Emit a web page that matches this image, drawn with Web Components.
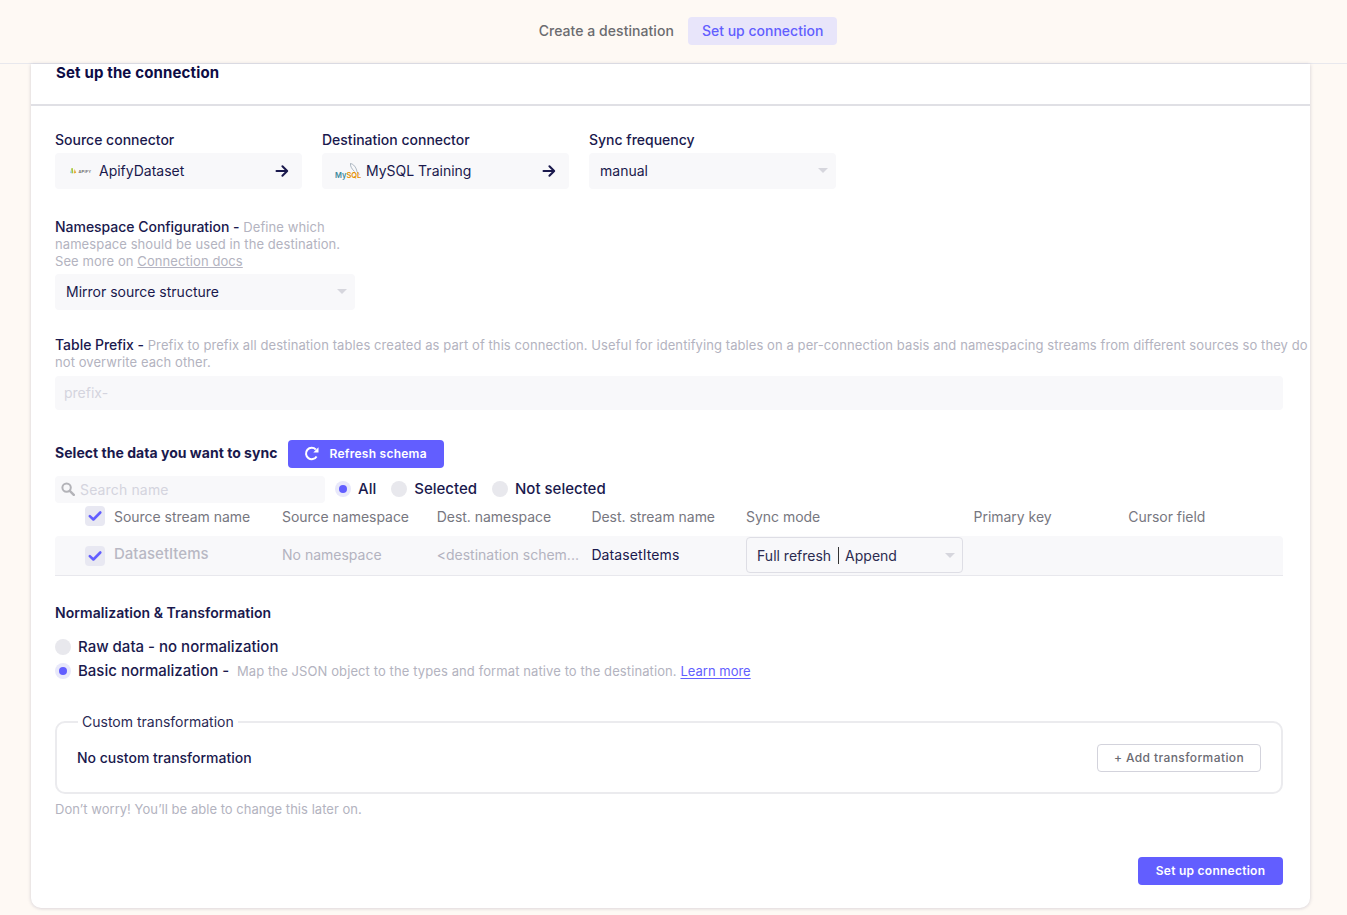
<!DOCTYPE html>
<html><head><meta charset="utf-8"><style>
html,body{margin:0;padding:0;height:915px;overflow:hidden;background:#fef9f4;font-family:Inter,"Liberation Sans",sans-serif;color:#1a194d}
</style></head><body>
<app-page></app-page>
<template id="t-step"><style>
:host{display:block;font-size:14px;line-height:18px;font-weight:500;padding:5px 14px;border-radius:4px;color:#6b6b6f;letter-spacing:.05px}
:host([active]){background:#e8e5fa;color:#625eff;letter-spacing:0}
</style><slot></slot></template>

<template id="t-field"><style>
:host{display:block}
.l{font-size:14px;line-height:17px;font-weight:500;color:#1a194d;margin-bottom:5px}
.box{box-sizing:border-box;height:36px;background:#f8f8fa;border-radius:4px;display:flex;align-items:center;padding:0 11px 1px;font-size:14px;color:#1a194d}
::slotted([slot=icon]){flex:none;margin-right:6px}
.t{flex:1;white-space:nowrap}
</style><div class="l"><slot name="label"></slot></div><div class="box"><slot name="icon"></slot><span class="t"><slot></slot></span><slot name="end"></slot></div></template>

<template id="t-check"><style>
:host{display:block;width:20px;height:20px;border-radius:4px;background:#e8e8f2;flex:none}
svg{display:block}
</style><svg width="20" height="20" viewBox="0 0 20 20"><path d="M4.800 10.100l3.600 3.400 6.900-7" fill="none" stroke="#625eff" stroke-width="2.600" stroke-linecap="round" stroke-linejoin="round"/></svg></template>

<template id="t-radio"><style>
:host{display:inline-flex;align-items:center;font-size:15px;line-height:18px;font-weight:500;color:#1a194d;white-space:nowrap}
.r{width:16px;height:16px;border-radius:50%;background:#e8e8ed;margin-right:7px;display:flex;align-items:center;justify-content:center;flex:none}
:host([on]) .r{background:#e8e8fa}
:host([on]) .r::after{content:"";width:8px;height:8px;border-radius:50%;background:#625eff}
</style><span class="r"></span><slot></slot></template>

<template id="t-btn"><style>
:host{display:inline-flex;align-items:center;justify-content:center;box-sizing:border-box;height:28px;padding-bottom:1px;background:#625eff;color:#fff;border-radius:4px;font-size:12px;font-weight:600;letter-spacing:.26px;white-space:nowrap}
</style><slot></slot></template>

<template id="t-caret"><style>
:host{display:block;width:0;height:0;border-left:5px solid transparent;border-right:5px solid transparent;border-top:5px solid #d6d6dd;flex:none;margin-right:-3px}
</style></template>

<template id="t-stream"><style>
:host{display:grid;grid-template-columns:59px 168px 154.7px 154.7px 154.7px 227.5px 154.7px 1fr;align-items:center;font-size:14px}
</style><slot></slot></template>

<template id="t-page"><style>
:host{display:block;height:915px;overflow:hidden;--muted:#b3b3c0;--ink:#1a194d}
*{box-sizing:border-box}
header{height:64px;border-bottom:1px solid #e8e8ed;display:flex;justify-content:center;align-items:center;padding:0 0 1px 15px;background:#fef9f4}
main{margin:0 37px 0 31px;height:844px;background:#fff;border-radius:0 0 10px 10px;box-shadow:0 0 4px rgba(26,25,77,.14),0 1px 3px rgba(26,25,77,.06)}
.title{height:42px;border-bottom:2px solid #e0e0e5;padding:0 25px;font-size:15px;font-weight:700;line-height:18px;letter-spacing:.15px;color:#0d0c45}
.body{padding:25px 27px 0 24px;position:relative}
.row1{display:flex;gap:20px;align-items:flex-start}
.row1>app-field{width:247px}
.ns{width:300px;margin-top:29px}
.lbl{font-size:14px;line-height:17px;font-weight:500;color:var(--ink);letter-spacing:-.03px}
.sm{font-size:13px;line-height:17px;font-weight:400;color:var(--muted);letter-spacing:.08px}
.lbl .sm,.norm .sm{line-height:14px}
.sm u{text-underline-offset:1px}
.ns app-field{margin-top:4px}
.prefix{margin-top:26px;width:1256px}
.pinput{height:34px;margin:6px 0 0;width:1228px;background:#f8f8fa;border-radius:4px;font-size:14px;line-height:33px;padding:0 9px;color:#d4d4de}
.sel{display:flex;align-items:center;gap:11px;margin-top:30px;height:28px}
.sel b{font-size:14px;font-weight:700;color:#1a194d;letter-spacing:.03px;margin-top:-3px}
.sel app-btn{width:156px;justify-content:flex-start;padding-left:16px}
.filters{display:flex;align-items:center;margin-top:7px;height:28px;gap:15px}
.search{width:270px;height:27px;align-self:flex-end;background:#f8f8fa;border-radius:4px;display:flex;align-items:center;padding:0 0 1px 6px;gap:5px;font-size:14px;color:#d4d4de;letter-spacing:.15px;margin-right:-5px}
.thead{height:28px;margin-top:-1px;color:#77777f;letter-spacing:-.03px}
.thead app-check,.trow app-check{justify-self:end;margin-right:9px}
.trow{height:40px;background:#f8f8fa;border-bottom:1px solid #e8e8ed;border-radius:4px 4px 0 0;margin:6px 0 0;width:1228px;color:#b3b3c0}
.trow .name{font-size:15px;font-weight:500;color:#b8b8c4;margin-top:-4px}
.trow .dark{color:var(--ink);margin-top:-3px;letter-spacing:.1px}
.trow .cell{white-space:nowrap;overflow:hidden;margin-top:-2px}
.mode{width:217px;height:36px;margin-top:-2px;border:1px solid #dedee5;border-radius:4px;background:#f8f8fa;display:flex;align-items:center;padding:2px 10px 0 10px;color:#2b2b50;font-size:14px;justify-content:space-between;white-space:nowrap}
.mode i{display:inline-block;width:1px;height:17px;background:#333;vertical-align:-3px;margin:0 6.5px}
h3{margin:28px 0 0;font-size:14px;line-height:17px;font-weight:600;color:var(--ink);letter-spacing:.05px}
.norm{margin-top:17px;display:flex;flex-direction:column;gap:6px}
.norm .sm{margin-left:4px;letter-spacing:.1px}
.norm a{color:#625eff;text-decoration:underline;text-underline-offset:2px;letter-spacing:0}
fieldset{margin:33px 0 0;padding:0 20px;width:1228px;height:81px;border:2px solid #ebebee;border-radius:10px;display:flex}
legend{font-size:14px;line-height:18px;font-weight:400;color:#2b2a55;padding:0 4px;margin-left:1px;letter-spacing:0}
.ft{display:flex;justify-content:space-between;align-items:center;height:54px;font-size:14px;font-weight:500;color:#1a194d;width:100%}
.ft span{margin-top:-2px}
.add{width:164px;height:28px;padding-bottom:1px;border:1px solid #d3d3dc;border-radius:4px;display:flex;align-items:center;justify-content:center;font-size:12px;font-weight:500;color:#6b6b73;letter-spacing:.4px}
.note{margin-top:7px;letter-spacing:.03px}
.foot{display:flex;justify-content:flex-end;width:1228px;margin-top:39px}
.foot app-btn{width:145px}
</style>
<header><app-step>Create a destination</app-step><app-step active>Set up connection</app-step></header>
<main>
<div class="title">Set up the connection</div>
<div class="body">
<div class="row1">
<app-field><span slot="label">Source connector</span>
<svg slot="icon" width="27" height="14" viewBox="0 0 27 14"><path d="M5 4.500l1 5 1.300-.4L6.800 4z" fill="#a8c838"/><path d="M8.500 5l1.800 3.800-2.400.8z" fill="#e8a838"/><path d="M5 5.500l.8 3.800-1.400-.2z" fill="#70b8c8"/><text x="12.500" y="9" font-family="Inter,sans-serif" font-size="4" font-weight="600" fill="#666" letter-spacing=".2">APIFY</text></svg>
ApifyDataset
<svg slot="end" width="14" height="14" viewBox="0 0 14 14" style="margin-right:2px"><path d="M1.500 7h10.500M7.400 2.200L12.200 7l-4.800 4.800" fill="none" stroke="#1a194d" stroke-width="2" stroke-linecap="round" stroke-linejoin="round"/></svg>
</app-field>
<app-field><span slot="label">Destination connector</span>
<svg slot="icon" width="27" height="24" viewBox="0 0 27 24" style="margin-right:5px;margin-left:1px"><path d="M16.500 4.500c3 .6 5.500 3.500 6.500 8l2.500 3M16.500 4.500c-.4 3 1.500 5.500 4 8" fill="none" stroke="#8a9aa8" stroke-width=".7"/><text x="1" y="19" font-family="Inter,sans-serif" font-size="7.500" font-weight="600" fill="#3e8a9c">My<tspan fill="#e48e00">SQL</tspan></text></svg>
MySQL Training
<svg slot="end" width="14" height="14" viewBox="0 0 14 14" style="margin-right:2px"><path d="M1.500 7h10.500M7.400 2.200L12.200 7l-4.800 4.800" fill="none" stroke="#1a194d" stroke-width="2" stroke-linecap="round" stroke-linejoin="round"/></svg>
</app-field>
<app-field><span slot="label">Sync frequency</span>manual<app-caret slot="end"></app-caret></app-field>
</div>
<div class="ns">
<div class="lbl">Namespace Configuration - <span class="sm">Define which namespace should be used in the destination.<br>See more on <u>Connection docs</u></span></div>
<app-field>Mirror source structure<app-caret slot="end"></app-caret></app-field>
</div>
<div class="prefix">
<div class="lbl">Table Prefix - <span class="sm">Prefix to prefix all destination tables created as part of this connection. Useful for identifying tables on a per-connection basis and namespacing streams from different sources so they do not overwrite each other.</span></div>
<div class="pinput">prefix-</div>
</div>
<div class="sel"><b>Select the data you want to sync</b>
<app-btn><svg width="16" height="16" viewBox="0 0 16 16" style="margin-right:9px"><path d="M12.600 10.400A5.700 5.700 0 1 1 11.800 3.500" fill="none" stroke="#fff" stroke-width="2" stroke-linecap="butt"/><path d="M14.500 1.200v5.200H9.300z" fill="#fff"/></svg>Refresh schema</app-btn></div>
<div class="filters">
<div class="search"><svg width="14" height="14" viewBox="0 0 14 14"><circle cx="5.600" cy="5.600" r="4.200" fill="none" stroke="#b3b3b8" stroke-width="2"/><path d="M8.800 8.800l4 4" stroke="#b3b3b8" stroke-width="2.400" stroke-linecap="round"/></svg>Search name</div>
<app-radio on>All</app-radio><app-radio>Selected</app-radio><app-radio>Not selected</app-radio>
</div>
<app-stream class="thead"><app-check></app-check><span>Source stream name</span><span>Source namespace</span><span>Dest. namespace</span><span>Dest. stream name</span><span>Sync mode</span><span>Primary key</span><span>Cursor field</span></app-stream>
<app-stream class="trow"><app-check></app-check><span class="name">DatasetItems</span><span class="cell">No namespace</span><span class="cell">&lt;destination schem...</span><span class="dark">DatasetItems</span><div class="mode"><span>Full refresh<i></i>Append</span><app-caret></app-caret></div><span></span><span></span></app-stream>
<h3>Normalization &amp; Transformation</h3>
<div class="norm">
<app-radio>Raw data - no normalization</app-radio>
<app-radio on>Basic normalization - <span class="sm">&nbsp;Map the JSON object to the types and format native to the destination. <a>Learn more</a></span></app-radio>
</div>
<fieldset><legend>Custom transformation</legend>
<div class="ft"><span>No custom transformation</span><div class="add">+ Add transformation</div></div>
</fieldset>
<div class="sm note">Don’t worry! You’ll be able to change this later on.</div>
<div class="foot"><app-btn>Set up connection</app-btn></div>
</div>
</main>
</template>
<script>
const def=(name,id)=>customElements.define(name,class extends HTMLElement{constructor(){super();this.attachShadow({mode:"open"}).appendChild(document.getElementById(id).content.cloneNode(true))}});
[["app-step","t-step"],["app-field","t-field"],["app-check","t-check"],["app-radio","t-radio"],["app-btn","t-btn"],["app-caret","t-caret"],["app-stream","t-stream"],["app-page","t-page"]].forEach(a=>def(...a));
</script>
</body></html>
